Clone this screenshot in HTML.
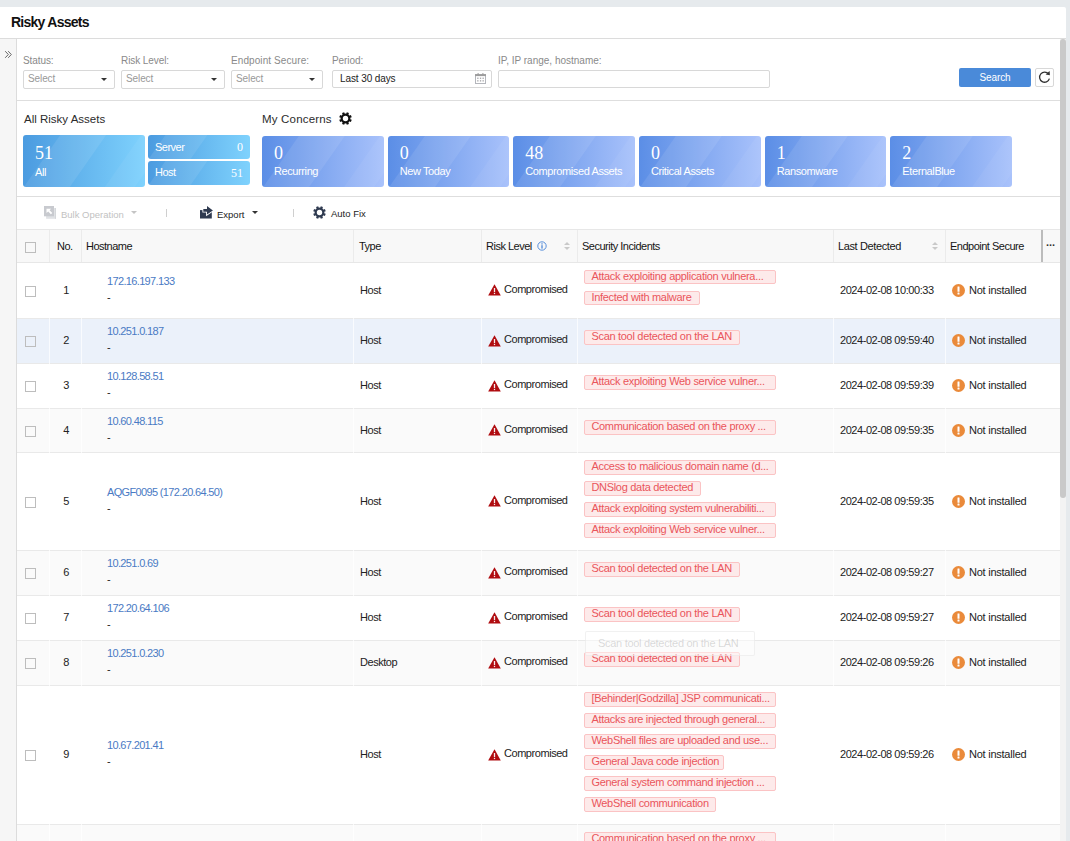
<!DOCTYPE html>
<html lang="en">
<head>
<meta charset="utf-8">
<title>Risky Assets</title>
<style>
*{box-sizing:border-box;margin:0;padding:0}
html,body{width:1070px;height:841px;overflow:hidden}
body{position:relative;background:#e6eaed;font-family:"Liberation Sans",sans-serif;font-size:11px;color:#222}
.abs{position:absolute}
#topbar{left:0;top:7px;width:1066px;height:32px;background:#fff;border-bottom:1px solid #dcdcdc;border-top-right-radius:2px}
#title{left:11px;top:14px;font-size:14px;font-weight:bold;color:#111;line-height:16px;letter-spacing:-0.74px}
#side{left:0;top:39px;width:17px;height:802px;background:#f6f6f6;border-right:1px solid #dcdcdc}
#side span{position:absolute;left:4px;top:7px;font-size:12px;line-height:14px;color:#555}
#main{left:17px;top:39px;width:1043px;height:802px;background:#fff;overflow:hidden}
#track{left:1060px;top:39px;width:6px;height:802px;background:#f3f3f3}
#thumb{left:1060px;top:39px;width:6px;height:459px;background:#c9c9c9;border-radius:3px}
/* filter */
.lbl{color:#8a8a8a;font-size:10px;line-height:13px;top:54px;white-space:nowrap;letter-spacing:-0.08px}
.sel{top:70px;height:19px;border:1px solid #d8d8d8;border-radius:2px;background:#fff;color:#999;font-size:10px;line-height:16px;padding-left:4px;letter-spacing:-0.1px}
.sel i{position:absolute;right:7px;top:7px;width:0;height:0;border-left:3px solid transparent;border-right:3px solid transparent;border-top:3.5px solid #333}
.inp{top:70px;height:18px;border:1px solid #d8d8d8;border-radius:2px;background:#fff;color:#222;font-size:10px;line-height:16px;padding-left:7px;letter-spacing:-0.1px}
#hr1{left:17px;top:100px;width:1043px;height:1px;background:#dedede}
#hr2{left:17px;top:196px;width:1043px;height:1px;background:#dedede}
#search{left:959px;top:68px;width:72px;height:19px;background:#4a8ad9;border-radius:2px;color:#fff;font-size:10px;line-height:19px;text-align:center;letter-spacing:-0.1px}
#refresh{left:1035px;top:68px;width:19px;height:19px;background:#fff;border:1px solid #d8d8d8;border-radius:2px}
/* cards */
.sect{font-size:11.5px;line-height:15px;color:#2b2b2b;top:112px;white-space:nowrap}
.card{top:136px;height:51px;border-radius:3px;overflow:hidden;color:#fff}
.card b{position:absolute;left:12px;top:6px;font-family:"Liberation Serif",serif;font-weight:normal;font-size:18px;line-height:22px}
.card u{position:absolute;left:12px;top:29px;text-decoration:none;font-size:11px;line-height:13px;white-space:nowrap;letter-spacing:-0.4px}
.blue{background:linear-gradient(90deg,#5b8ee6 0%,#a9c2fb 100%)}
.cyan{background:linear-gradient(90deg,#4b9be0 0%,#7fd2fd 100%)}
.card:before{content:"";position:absolute;top:0;height:100%;left:19px;width:46px;transform:skewX(-35deg);background:rgba(255,255,255,.09)}
.card:after{content:"";position:absolute;top:0;height:100%;left:100px;width:30px;transform:skewX(-35deg);background:rgba(255,255,255,.05)}
.mini{height:24px;border-radius:3px;overflow:hidden;color:#fff;left:148px;width:102px}
.mini u{position:absolute;left:7px;top:5px;text-decoration:none;font-size:11px;line-height:13px;letter-spacing:-0.5px}
.mini b{position:absolute;right:7px;top:4px;font-family:"Liberation Serif",serif;font-weight:normal;font-size:12px;line-height:16px}
.mini:before{content:"";position:absolute;top:0;left:9px;width:42px;height:100%;transform:skewX(-35deg);background:rgba(255,255,255,.09)}
/* toolbar */
.tb{top:208px;font-size:9.5px;line-height:14px;color:#222;white-space:nowrap}
.tb.dis{color:#c2c2c2}
.caret{top:211px;width:0;height:0;border-left:3px solid transparent;border-right:3px solid transparent;border-top:3px solid #333}
.vsep{top:209px;width:1px;height:8px;background:#cfcfcf}
/* table */
#thead{left:17px;top:229px;width:1043px;height:34px;background:#f8f8f8;border-top:1px solid #e7e7e7;border-bottom:1px solid #e7e7e7}
#thead .cs{position:absolute;top:0;width:1px;height:32px;background:#ebebeb}
#thead .cs2{position:absolute;top:0;width:1.5px;height:32px;background:#bcbcbc}
.th{position:absolute;top:9px;font-size:11px;line-height:14px;color:#151515;white-space:nowrap;letter-spacing:-0.5px}
.su,.sd{position:absolute;width:0;height:0;border-left:3px solid transparent;border-right:3px solid transparent}
.su{top:12px;border-bottom:3px solid #c9c9c9}
.sd{top:17px;border-top:3px solid #c9c9c9}
.cb{position:absolute;width:11px;height:11px;border:1px solid #bdbdbd;background:transparent}
.row{left:17px;width:1043px;background:#fff;border-bottom:1px solid #e9e9e9}
.row.alt{background:#fafafa}
.row.hov{background:#ebf1fa}
.c{position:absolute;font-size:11px;line-height:14px;white-space:nowrap;color:#222;letter-spacing:-0.45px}
.no{left:33px;width:32px;text-align:center}
.hn{left:90px;color:#4a7ac4;letter-spacing:-0.65px}
.ds{left:90px}
.ty{left:343px}
.rl{left:487px}
.wi{position:absolute;left:471px}
.dt{left:823px}
.es{left:952px;letter-spacing:-0.24px}
.oi{position:absolute;left:935px}
.bs{top:263px;width:1px;height:578px;background:rgba(255,255,255,.7)}
.tag{position:absolute;left:567px;height:15px;border:1px solid #fbc3c4;background:#fdeaea;color:#ea555b;font-size:11px;line-height:11px;padding:0 0 0 6.4px;overflow:hidden;white-space:nowrap;border-radius:2px;letter-spacing:-0.3px}

#ghost{left:585px;top:631px;width:170px;height:25px;background:rgba(255,255,255,.45);border:1px solid rgba(228,228,228,.5);border-radius:2px;color:rgba(140,140,140,.33);letter-spacing:-0.3px;font-size:11px;line-height:23px;padding-left:12px;white-space:nowrap}
</style>
</head>
<body>
<div class="abs" id="topbar"></div>
<div class="abs" id="title">Risky Assets</div>
<div class="abs" id="side"><svg width="16" height="30" viewBox="0 0 16 30" style="position:absolute;left:0;top:0"><path d="M5.2 12.2L8.3 15.5 5.2 18.8M8.2 12.2L11.3 15.5 8.2 18.8" fill="none" stroke="#666" stroke-width="1"/></svg></div>
<div class="abs" id="main"></div>
<div class="abs" id="track"></div>
<div class="abs" id="thumb"></div>

<!-- filter bar -->
<div class="abs lbl" style="left:23px">Status:</div>
<div class="abs sel" style="left:23px;width:92px">Select<i></i></div>
<div class="abs lbl" style="left:121px">Risk Level:</div>
<div class="abs sel" style="left:121px;width:104px">Select<i></i></div>
<div class="abs lbl" style="left:231px;letter-spacing:.09px">Endpoint Secure:</div>
<div class="abs sel" style="left:231px;width:92px">Select<i></i></div>
<div class="abs lbl" style="left:332px">Period:</div>
<div class="abs inp" style="left:332px;width:160px">Last 30 days<svg width="11" height="11" viewBox="0 0 11 11" style="position:absolute;right:5px;top:2px"><rect x="0.5" y="1.6" width="10" height="8.9" fill="none" stroke="#b4b6bc"/><rect x="0" y="1.2" width="11" height="1.9" fill="#9c9c9c"/><rect x="2.6" y="0" width="1" height="2" fill="#9a9a9a"/><rect x="7.4" y="0" width="1" height="2" fill="#9a9a9a"/><g fill="#a2a2a6"><rect x="2.2" y="4.6" width="1.3" height="1.3"/><rect x="4.9" y="4.6" width="1.3" height="1.3"/><rect x="7.5" y="4.6" width="1.3" height="1.3"/><rect x="2.2" y="7.2" width="1.3" height="1.3"/><rect x="4.9" y="7.2" width="1.3" height="1.3"/><rect x="7.5" y="7.2" width="1.3" height="1.3"/></g></svg></div>
<div class="abs lbl" style="left:498px;letter-spacing:0">IP, IP range, hostname:</div>
<div class="abs inp" style="left:498px;width:272px"></div>
<div class="abs" id="search">Search</div>
<div class="abs" id="refresh"><svg width="17" height="17" viewBox="0 0 17 17" style="position:absolute;left:0;top:0"><path d="M12.6 5.2A5 5 0 1 0 13.4 9.6" fill="none" stroke="#333" stroke-width="1.3"/><path d="M9.6 5.6L13.9 6.2 13.6 2z" fill="#333"/></svg></div>
<div class="abs" id="hr1"></div>

<!-- cards -->
<div class="abs sect" style="left:24px">All Risky Assets</div>
<div class="abs card cyan" style="left:23px;width:122px;top:135px;height:52px"><b style="top:7px">51</b><u style="top:31px">All</u></div>
<div class="abs mini cyan" style="top:135px"><u style="top:6px">Server</u><b>0</b></div>
<div class="abs mini cyan" style="top:161px"><u>Host</u><b>51</b></div>
<div class="abs sect" style="left:262px;letter-spacing:.18px">My Concerns</div>
<div class="abs card blue" style="left:262px;width:121.67px"><b>0</b><u>Recurring</u></div>
<div class="abs card blue" style="left:387.67px;width:121.67px"><b>0</b><u>New Today</u></div>
<div class="abs card blue" style="left:513.33px;width:121.67px"><b>48</b><u>Compromised Assets</u></div>
<div class="abs card blue" style="left:639px;width:121.67px"><b>0</b><u>Critical Assets</u></div>
<div class="abs card blue" style="left:764.67px;width:121.67px"><b>1</b><u>Ransomware</u></div>
<div class="abs card blue" style="left:890.33px;width:121.67px"><b>2</b><u>EternalBlue</u></div>
<div class="abs" id="hr2"></div>

<!-- TOOLBAR -->
<!-- toolbar -->
<svg class="abs" style="left:44px;top:206px" width="13" height="14" viewBox="0 0 13 14"><rect x="2.1" y="2" width="9.8" height="10.8" fill="#e0e2e5"/><rect x="11" y="2" width="0.9" height="10.8" fill="#d3d5d9"/><rect x="0" y="0" width="10" height="10.3" fill="#c8cacf"/><path d="M2.5 2.7H7.1L5.6 4.2 8.3 6.9 6.9 8.3 4.2 5.6 2.5 7z" fill="#fff"/></svg>
<div class="abs tb dis" style="left:61px">Bulk Operation</div>
<i class="abs caret" style="left:131px;border-top-color:#c4c4c4"></i>
<i class="abs vsep" style="left:166px"></i>
<svg class="abs" style="left:200px;top:205px" width="14" height="15" viewBox="0 0 14 15"><rect x="0" y="5.1" width="11.8" height="8.4" fill="#2f3a50"/><path d="M3.3 3.9H7V0.9L12.9 5.4 7 9.6V6.7H3.3z" fill="#2f3a50" stroke="#fff" stroke-width="1.8" paint-order="stroke fill" stroke-linejoin="miter"/></svg>
<div class="abs tb" style="left:217px">Export</div>
<i class="abs caret" style="left:252px"></i>
<i class="abs vsep" style="left:293px"></i>
<svg class="abs" style="left:313.3px;top:205.5px" width="13" height="13" viewBox="0 0 13 13"><path d="M11.15 7.18 L12.76 7.85 L11.88 9.97 L10.27 9.31 L9.31 10.27 L9.97 11.88 L7.85 12.76 L7.18 11.15 L5.82 11.15 L5.15 12.76 L3.03 11.88 L3.69 10.27 L2.73 9.31 L1.12 9.97 L0.24 7.85 L1.85 7.18 L1.85 5.82 L0.24 5.15 L1.12 3.03 L2.73 3.69 L3.69 2.73 L3.03 1.12 L5.15 0.24 L5.82 1.85 L7.18 1.85 L7.85 0.24 L9.97 1.12 L9.31 2.73 L10.27 3.69 L11.88 3.03 L12.76 5.15 L11.15 5.82Z" fill="#2f3a50"/><circle cx="6.5" cy="6.5" r="3.75" fill="none" stroke="#2f3a50" stroke-width="2.1"/><circle cx="6.5" cy="6.5" r="2.7" fill="#fff"/></svg>
<div class="abs tb" style="left:331px;top:207px">Auto Fix</div>
<svg class="abs" style="left:339px;top:111.7px" width="13" height="13" viewBox="0 0 13 13"><path d="M11.15 7.18 L12.76 7.85 L11.88 9.97 L10.27 9.31 L9.31 10.27 L9.97 11.88 L7.85 12.76 L7.18 11.15 L5.82 11.15 L5.15 12.76 L3.03 11.88 L3.69 10.27 L2.73 9.31 L1.12 9.97 L0.24 7.85 L1.85 7.18 L1.85 5.82 L0.24 5.15 L1.12 3.03 L2.73 3.69 L3.69 2.73 L3.03 1.12 L5.15 0.24 L5.82 1.85 L7.18 1.85 L7.85 0.24 L9.97 1.12 L9.31 2.73 L10.27 3.69 L11.88 3.03 L12.76 5.15 L11.15 5.82Z" fill="#111"/><circle cx="6.5" cy="6.5" r="3.75" fill="none" stroke="#111" stroke-width="2.1"/><circle cx="6.5" cy="6.5" r="2.7" fill="#fff"/></svg>
<!-- table header -->
<div class="abs" id="thead">
<i class="cb" style="left:8px;top:12px"></i>
<i class="cs" style="left:32px"></i>
<i class="cs" style="left:64px"></i>
<i class="cs" style="left:336px"></i>
<i class="cs" style="left:464px"></i>
<i class="cs" style="left:560px"></i>
<i class="cs" style="left:816px"></i>
<i class="cs" style="left:928px"></i>
<i class="cs2" style="left:1024px"></i>
<span class="th" style="left:40px">No.</span>
<span class="th" style="left:69px">Hostname</span>
<span class="th" style="left:342px">Type</span>
<span class="th" style="left:469px">Risk Level</span>
<span class="th" style="left:565px">Security Incidents</span>
<span class="th" style="left:821px;letter-spacing:-0.38px">Last Detected</span>
<span class="th" style="left:933px">Endpoint Secure</span>
<svg style="position:absolute;left:520px;top:11px" width="10" height="10" viewBox="0 0 10 10"><circle cx="5" cy="5" r="4.2" fill="none" stroke="#4a86d8" stroke-width="0.9"/><rect x="4.4" y="4.2" width="1.2" height="3.4" fill="#3f7fd6"/><rect x="4.4" y="2.3" width="1.2" height="1.2" fill="#3f7fd6"/></svg>
<i class="su" style="left:547px"></i><i class="sd" style="left:547px"></i>
<i class="su" style="left:915px"></i><i class="sd" style="left:915px"></i>
<span class="th" style="left:1029px;top:5px;letter-spacing:0;font-weight:bold;color:#333">...</span>
</div>
<!-- table rows -->
<div class="abs row" style="top:263px;height:56px">
<i class="cb" style="left:8px;top:23px"></i>
<span class="c no" style="top:20px">1</span>
<span class="c hn" style="top:11px">172.16.197.133</span><span class="c ds" style="top:27px">-</span>
<span class="c ty" style="top:20px">Host</span>
<svg class="wi" style="top:21px" width="13" height="12" viewBox="0 0 13 12"><path d="M6.5 0.3L12.8 11.6H0.2z" fill="#b00c10"/><rect x="5.85" y="4" width="1.3" height="4" fill="#fff" fill-opacity=".92"/><rect x="5.85" y="8.8" width="1.3" height="1.3" fill="#fff" fill-opacity=".92"/></svg>
<span class="c rl" style="top:19px">Compromised</span>
<span class="tag" style="top:7px;width:192px;height:14px">Attack exploiting application vulnera...</span>
<span class="tag" style="top:28px;width:116px;height:14px">Infected with malware</span>
<span class="c dt" style="top:20px">2024-02-08 10:00:33</span>
<svg class="oi" style="top:20.5px" width="13" height="13" viewBox="0 0 13 13"><circle cx="6.5" cy="6.5" r="6.5" fill="#ea8a3a"/><rect x="5.5" y="2.5" width="2" height="5.2" rx="0.3" fill="#fff"/><rect x="5.5" y="8.6" width="2" height="1.9" rx="0.3" fill="#fff"/></svg>
<span class="c es" style="top:20px">Not installed</span>
</div>
<div class="abs row hov" style="top:319px;height:45px">
<i class="cb" style="left:8px;top:17px"></i>
<span class="c no" style="top:14px">2</span>
<span class="c hn" style="top:5px">10.251.0.187</span><span class="c ds" style="top:21px">-</span>
<span class="c ty" style="top:14px">Host</span>
<svg class="wi" style="top:15.5px" width="13" height="12" viewBox="0 0 13 12"><path d="M6.5 0.3L12.8 11.6H0.2z" fill="#b00c10"/><rect x="5.85" y="4" width="1.3" height="4" fill="#fff" fill-opacity=".92"/><rect x="5.85" y="8.8" width="1.3" height="1.3" fill="#fff" fill-opacity=".92"/></svg>
<span class="c rl" style="top:13px">Compromised</span>
<span class="tag" style="top:11px;width:156px">Scan tool detected on the LAN</span>
<span class="c dt" style="top:14px">2024-02-08 09:59:40</span>
<svg class="oi" style="top:15px" width="13" height="13" viewBox="0 0 13 13"><circle cx="6.5" cy="6.5" r="6.5" fill="#ea8a3a"/><rect x="5.5" y="2.5" width="2" height="5.2" rx="0.3" fill="#fff"/><rect x="5.5" y="8.6" width="2" height="1.9" rx="0.3" fill="#fff"/></svg>
<span class="c es" style="top:14px">Not installed</span>
</div>
<div class="abs row" style="top:364px;height:45px">
<i class="cb" style="left:8px;top:17px"></i>
<span class="c no" style="top:14px">3</span>
<span class="c hn" style="top:5px">10.128.58.51</span><span class="c ds" style="top:21px">-</span>
<span class="c ty" style="top:14px">Host</span>
<svg class="wi" style="top:15.5px" width="13" height="12" viewBox="0 0 13 12"><path d="M6.5 0.3L12.8 11.6H0.2z" fill="#b00c10"/><rect x="5.85" y="4" width="1.3" height="4" fill="#fff" fill-opacity=".92"/><rect x="5.85" y="8.8" width="1.3" height="1.3" fill="#fff" fill-opacity=".92"/></svg>
<span class="c rl" style="top:13px">Compromised</span>
<span class="tag" style="top:11px;width:192px">Attack exploiting Web service vulner...</span>
<span class="c dt" style="top:14px">2024-02-08 09:59:39</span>
<svg class="oi" style="top:15px" width="13" height="13" viewBox="0 0 13 13"><circle cx="6.5" cy="6.5" r="6.5" fill="#ea8a3a"/><rect x="5.5" y="2.5" width="2" height="5.2" rx="0.3" fill="#fff"/><rect x="5.5" y="8.6" width="2" height="1.9" rx="0.3" fill="#fff"/></svg>
<span class="c es" style="top:14px">Not installed</span>
</div>
<div class="abs row alt" style="top:409px;height:44px">
<i class="cb" style="left:8px;top:17px"></i>
<span class="c no" style="top:14px">4</span>
<span class="c hn" style="top:5px">10.60.48.115</span><span class="c ds" style="top:21px">-</span>
<span class="c ty" style="top:14px">Host</span>
<svg class="wi" style="top:15px" width="13" height="12" viewBox="0 0 13 12"><path d="M6.5 0.3L12.8 11.6H0.2z" fill="#b00c10"/><rect x="5.85" y="4" width="1.3" height="4" fill="#fff" fill-opacity=".92"/><rect x="5.85" y="8.8" width="1.3" height="1.3" fill="#fff" fill-opacity=".92"/></svg>
<span class="c rl" style="top:13px">Compromised</span>
<span class="tag" style="top:11px;width:192px">Communication based on the proxy ...</span>
<span class="c dt" style="top:14px">2024-02-08 09:59:35</span>
<svg class="oi" style="top:14.5px" width="13" height="13" viewBox="0 0 13 13"><circle cx="6.5" cy="6.5" r="6.5" fill="#ea8a3a"/><rect x="5.5" y="2.5" width="2" height="5.2" rx="0.3" fill="#fff"/><rect x="5.5" y="8.6" width="2" height="1.9" rx="0.3" fill="#fff"/></svg>
<span class="c es" style="top:14px">Not installed</span>
</div>
<div class="abs row" style="top:453px;height:98px">
<i class="cb" style="left:8px;top:44px"></i>
<span class="c no" style="top:41px">5</span>
<span class="c hn" style="top:32px">AQGF0095 (172.20.64.50)</span><span class="c ds" style="top:48px">-</span>
<span class="c ty" style="top:41px">Host</span>
<svg class="wi" style="top:42px" width="13" height="12" viewBox="0 0 13 12"><path d="M6.5 0.3L12.8 11.6H0.2z" fill="#b00c10"/><rect x="5.85" y="4" width="1.3" height="4" fill="#fff" fill-opacity=".92"/><rect x="5.85" y="8.8" width="1.3" height="1.3" fill="#fff" fill-opacity=".92"/></svg>
<span class="c rl" style="top:40px">Compromised</span>
<span class="tag" style="top:7px;width:192px">Access to malicious domain name (d...</span>
<span class="tag" style="top:28px;width:117px">DNSlog data detected</span>
<span class="tag" style="top:49px;width:192px">Attack exploiting system vulnerabiliti...</span>
<span class="tag" style="top:70px;width:192px">Attack exploiting Web service vulner...</span>
<span class="c dt" style="top:41px">2024-02-08 09:59:35</span>
<svg class="oi" style="top:41.5px" width="13" height="13" viewBox="0 0 13 13"><circle cx="6.5" cy="6.5" r="6.5" fill="#ea8a3a"/><rect x="5.5" y="2.5" width="2" height="5.2" rx="0.3" fill="#fff"/><rect x="5.5" y="8.6" width="2" height="1.9" rx="0.3" fill="#fff"/></svg>
<span class="c es" style="top:41px">Not installed</span>
</div>
<div class="abs row alt" style="top:551px;height:45px">
<i class="cb" style="left:8px;top:17px"></i>
<span class="c no" style="top:14px">6</span>
<span class="c hn" style="top:5px">10.251.0.69</span><span class="c ds" style="top:21px">-</span>
<span class="c ty" style="top:14px">Host</span>
<svg class="wi" style="top:15.5px" width="13" height="12" viewBox="0 0 13 12"><path d="M6.5 0.3L12.8 11.6H0.2z" fill="#b00c10"/><rect x="5.85" y="4" width="1.3" height="4" fill="#fff" fill-opacity=".92"/><rect x="5.85" y="8.8" width="1.3" height="1.3" fill="#fff" fill-opacity=".92"/></svg>
<span class="c rl" style="top:13px">Compromised</span>
<span class="tag" style="top:11px;width:156px">Scan tool detected on the LAN</span>
<span class="c dt" style="top:14px">2024-02-08 09:59:27</span>
<svg class="oi" style="top:15px" width="13" height="13" viewBox="0 0 13 13"><circle cx="6.5" cy="6.5" r="6.5" fill="#ea8a3a"/><rect x="5.5" y="2.5" width="2" height="5.2" rx="0.3" fill="#fff"/><rect x="5.5" y="8.6" width="2" height="1.9" rx="0.3" fill="#fff"/></svg>
<span class="c es" style="top:14px">Not installed</span>
</div>
<div class="abs row" style="top:596px;height:45px">
<i class="cb" style="left:8px;top:17px"></i>
<span class="c no" style="top:14px">7</span>
<span class="c hn" style="top:5px">172.20.64.106</span><span class="c ds" style="top:21px">-</span>
<span class="c ty" style="top:14px">Host</span>
<svg class="wi" style="top:15.5px" width="13" height="12" viewBox="0 0 13 12"><path d="M6.5 0.3L12.8 11.6H0.2z" fill="#b00c10"/><rect x="5.85" y="4" width="1.3" height="4" fill="#fff" fill-opacity=".92"/><rect x="5.85" y="8.8" width="1.3" height="1.3" fill="#fff" fill-opacity=".92"/></svg>
<span class="c rl" style="top:13px">Compromised</span>
<span class="tag" style="top:11px;width:156px">Scan tool detected on the LAN</span>
<span class="c dt" style="top:14px">2024-02-08 09:59:27</span>
<svg class="oi" style="top:15px" width="13" height="13" viewBox="0 0 13 13"><circle cx="6.5" cy="6.5" r="6.5" fill="#ea8a3a"/><rect x="5.5" y="2.5" width="2" height="5.2" rx="0.3" fill="#fff"/><rect x="5.5" y="8.6" width="2" height="1.9" rx="0.3" fill="#fff"/></svg>
<span class="c es" style="top:14px">Not installed</span>
</div>
<div class="abs row alt" style="top:641px;height:45px">
<i class="cb" style="left:8px;top:17px"></i>
<span class="c no" style="top:14px">8</span>
<span class="c hn" style="top:5px">10.251.0.230</span><span class="c ds" style="top:21px">-</span>
<span class="c ty" style="top:14px">Desktop</span>
<svg class="wi" style="top:15.5px" width="13" height="12" viewBox="0 0 13 12"><path d="M6.5 0.3L12.8 11.6H0.2z" fill="#b00c10"/><rect x="5.85" y="4" width="1.3" height="4" fill="#fff" fill-opacity=".92"/><rect x="5.85" y="8.8" width="1.3" height="1.3" fill="#fff" fill-opacity=".92"/></svg>
<span class="c rl" style="top:13px">Compromised</span>
<span class="tag" style="top:11px;width:156px">Scan tool detected on the LAN</span>
<span class="c dt" style="top:14px">2024-02-08 09:59:26</span>
<svg class="oi" style="top:15px" width="13" height="13" viewBox="0 0 13 13"><circle cx="6.5" cy="6.5" r="6.5" fill="#ea8a3a"/><rect x="5.5" y="2.5" width="2" height="5.2" rx="0.3" fill="#fff"/><rect x="5.5" y="8.6" width="2" height="1.9" rx="0.3" fill="#fff"/></svg>
<span class="c es" style="top:14px">Not installed</span>
</div>
<div class="abs row" style="top:686px;height:139px">
<i class="cb" style="left:8px;top:64px"></i>
<span class="c no" style="top:61px">9</span>
<span class="c hn" style="top:52px">10.67.201.41</span><span class="c ds" style="top:68px">-</span>
<span class="c ty" style="top:61px">Host</span>
<svg class="wi" style="top:62.5px" width="13" height="12" viewBox="0 0 13 12"><path d="M6.5 0.3L12.8 11.6H0.2z" fill="#b00c10"/><rect x="5.85" y="4" width="1.3" height="4" fill="#fff" fill-opacity=".92"/><rect x="5.85" y="8.8" width="1.3" height="1.3" fill="#fff" fill-opacity=".92"/></svg>
<span class="c rl" style="top:60px">Compromised</span>
<span class="tag" style="top:6px;width:192px">[Behinder|Godzilla] JSP communicati...</span>
<span class="tag" style="top:27px;width:192px">Attacks are injected through general...</span>
<span class="tag" style="top:48px;width:192px">WebShell files are uploaded and use...</span>
<span class="tag" style="top:69px;width:140px">General Java code injection</span>
<span class="tag" style="top:90px;width:192px">General system command injection ...</span>
<span class="tag" style="top:111px;width:132px">WebShell communication</span>
<span class="c dt" style="top:61px">2024-02-08 09:59:26</span>
<svg class="oi" style="top:62px" width="13" height="13" viewBox="0 0 13 13"><circle cx="6.5" cy="6.5" r="6.5" fill="#ea8a3a"/><rect x="5.5" y="2.5" width="2" height="5.2" rx="0.3" fill="#fff"/><rect x="5.5" y="8.6" width="2" height="1.9" rx="0.3" fill="#fff"/></svg>
<span class="c es" style="top:61px">Not installed</span>
</div>
<div class="abs row alt" style="top:825px;height:120px">
<i class="cb" style="left:8px;top:55px"></i>
<span class="c no" style="top:52px">10</span>
<span class="c hn" style="top:43px">10.100.82.20</span><span class="c ds" style="top:59px">-</span>
<span class="c ty" style="top:52px">Host</span>
<svg class="wi" style="top:53px" width="13" height="12" viewBox="0 0 13 12"><path d="M6.5 0.3L12.8 11.6H0.2z" fill="#b00c10"/><rect x="5.85" y="4" width="1.3" height="4" fill="#fff" fill-opacity=".92"/><rect x="5.85" y="8.8" width="1.3" height="1.3" fill="#fff" fill-opacity=".92"/></svg>
<span class="c rl" style="top:51px">Compromised</span>
<span class="tag" style="top:7px;width:192px">Communication based on the proxy ...</span>
<span class="tag" style="top:28px;width:156px">Scan tool detected on the LAN</span>
<span class="c dt" style="top:52px">2024-02-08 09:59:25</span>
<svg class="oi" style="top:52.5px" width="13" height="13" viewBox="0 0 13 13"><circle cx="6.5" cy="6.5" r="6.5" fill="#ea8a3a"/><rect x="5.5" y="2.5" width="2" height="5.2" rx="0.3" fill="#fff"/><rect x="5.5" y="8.6" width="2" height="1.9" rx="0.3" fill="#fff"/></svg>
<span class="c es" style="top:52px">Not installed</span>
</div>
<i class="abs bs" style="left:49px"></i>
<i class="abs bs" style="left:81px"></i>
<i class="abs bs" style="left:353px"></i>
<i class="abs bs" style="left:481px"></i>
<i class="abs bs" style="left:577px"></i>
<i class="abs bs" style="left:833px"></i>
<i class="abs bs" style="left:945px"></i>
<div class="abs" id="ghost">Scan tool detected on the LAN</div>
<!-- TABLE -->
</body>
</html>
